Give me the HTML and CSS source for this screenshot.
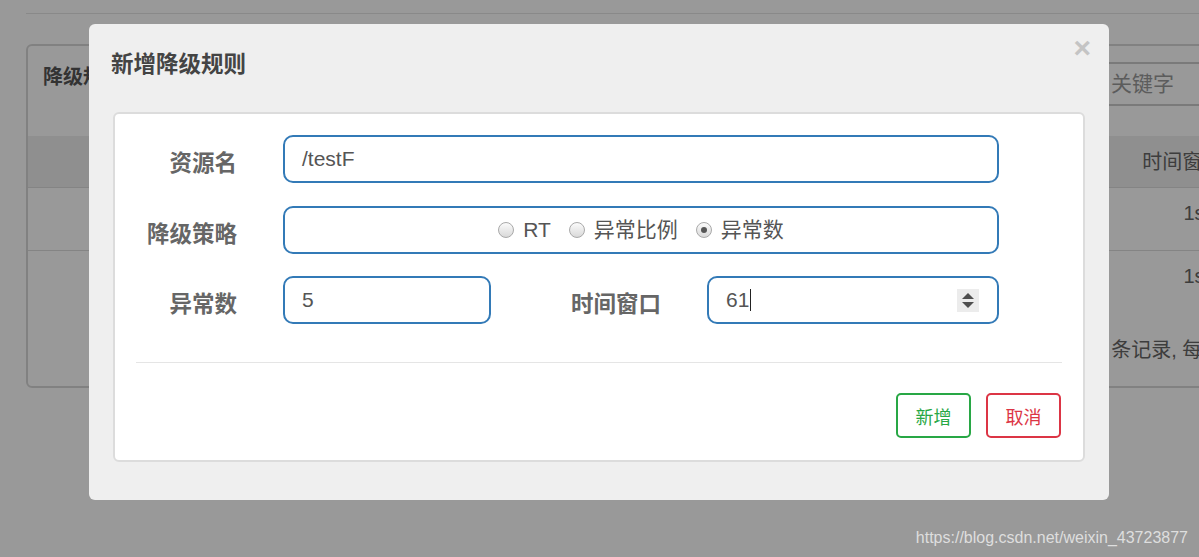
FILE: index.html
```html
<!DOCTYPE html>
<html lang="zh-CN">
<head>
<meta charset="utf-8">
<title>新增降级规则</title>
<link rel="stylesheet" href="styles.css">
</head>
<body>
<div class="page">
  <div class="topline"></div>
  <div class="panel">
    <div class="panel-head">
      <span class="panel-title">降级规则</span>
      <div class="search">关键字</div>
    </div>
    <div class="trow thead"><div class="fill"></div><div class="cell">时间窗口(s)</div></div>
    <div class="trow"><div class="fill"></div><div class="cell">1s</div></div>
    <div class="trow last"><div class="fill"></div><div class="cell">1s</div></div>
    <div class="pager">共 2 条记录, 每页 10 条记录</div>
  </div>
</div>
<div class="mask"></div>
<div class="modal">
  <div class="modal-head">
    <h4 class="modal-title">新增降级规则</h4>
    <span class="close">×</span>
  </div>
  <div class="modal-body">
    <div class="card">
      <div class="row">
        <label class="label">资源名</label>
        <div class="box box-wide">/testF</div>
      </div>
      <div class="row">
        <label class="label">降级策略</label>
        <div class="box box-wide radios">
          <span class="radio"></span><span class="rtext">RT</span>
          <span class="radio"></span><span class="rtext">异常比例</span>
          <span class="radio checked"></span><span class="rtext">异常数</span>
        </div>
      </div>
      <div class="row row-last">
        <label class="label">异常数</label>
        <div class="box box-small">5</div>
        <label class="label label-mid">时间窗口</label>
        <div class="box box-mid">61<span class="caret"></span><span class="grow"></span><span class="spin"><span class="up"></span><span class="down"></span></span></div>
      </div>
      <div class="divider"></div>
      <div class="actions">
        <button class="btn btn-add">新增</button>
        <button class="btn btn-cancel">取消</button>
      </div>
    </div>
  </div>
</div>
<div class="watermark">https://blog.csdn.net/weixin_43723877</div>
</body>
</html>
```
FILE: styles.css
```css
* { box-sizing: border-box; }
html, body {
  margin: 0;
  padding: 0;
  width: 1199px;
  height: 557px;
  overflow: hidden;
  background: #fff;
  font-family: "Liberation Sans", "Noto Sans CJK SC", sans-serif;
}
.page {
  padding-left: 26px;
  width: 1320px;
}
.topline {
  height: 15px;
  border-bottom: 1px solid #e4e4e4;
  margin-top: -1px;
}
.panel {
  margin-top: 30px;
  width: 1260px;
  height: 344px;
  border: 2px solid #d8d8d8;
  border-radius: 6px;
  display: flex;
  flex-direction: column;
}
.panel-head {
  height: 90px;
  display: flex;
  align-items: flex-start;
  justify-content: space-between;
  padding-left: 15px;
}
.panel-title {
  margin-top: 17px;
  font-size: 20px;
  line-height: 28px;
  font-weight: bold;
  color: #555;
}
.search {
  margin-top: 16px;
  margin-right: 39px;
  width: 150px;
  height: 44px;
  border: 2px solid #ccc;
  padding-left: 14px;
  font-size: 21px;
  line-height: 40px;
  color: #999;
}
.trow {
  display: flex;
  height: 63px;
  border-top: 1px solid #ddd;
  font-size: 20px;
  color: #666;
}
.thead {
  height: 51px;
  border-top: none;
  background: #eee;
  align-items: center;
}
.fill { flex: 1; }
.cell {
  width: 140px;
  margin-right: 20px;
  text-align: center;
  padding-top: 13px;
  line-height: 24px;
  white-space: nowrap;
}
.thead .cell { padding-top: 0; }
.pager {
  padding-left: 1041px;
  padding-top: 25px;
  font-size: 20px;
  color: #666;
  line-height: 24px;
  white-space: nowrap;
}
.mask {
  position: absolute;
  inset: 0;
  background: rgba(0, 0, 0, 0.4);
}
.modal {
  position: absolute;
  left: 89px;
  top: 24px;
  width: 1020px;
  height: 476px;
  background: #efefef;
  border-radius: 6px;
}
.modal-head {
  height: 88px;
  padding-left: 22px;
  padding-top: 25px;
}
.modal-title {
  margin: 0;
  font-size: 22.5px;
  line-height: 32px;
  font-weight: bold;
  color: #444;
}
.close {
  position: absolute;
  right: 18px;
  top: 2px;
  font-size: 30px;
  line-height: 44px;
  font-weight: bold;
  color: #c4c4c4;
}
.modal-body {
  padding: 0 24px 38px;
}
.card {
  background: #fff;
  border: 2px solid #dcdcdc;
  border-radius: 6px;
  padding: 21px 21px 22px;
}
.row {
  display: flex;
  align-items: center;
  height: 48px;
  margin-bottom: 23px;
}
.row-last { margin-bottom: 0; margin-top: -1px; }
.label {
  width: 101px;
  margin-right: 46px;
  text-align: right;
  font-size: 22.5px;
  line-height: 30px;
  font-weight: bold;
  color: #666;
  padding-top: 10px;
  white-space: nowrap;
}
.label-mid { width: 170px; }
.box {
  height: 48px;
  border: 2px solid #337ab7;
  border-radius: 10px;
  padding: 0 18px 0 17px;
  display: flex;
  align-items: center;
  font-size: 21px;
  color: #555;
}
.box-wide { width: 716px; }
.box-small { width: 208px; }
.box-mid { width: 292px; }
.radios {
  justify-content: center;
  padding-left: 0;
  padding-right: 0;
}
.radio {
  width: 16px;
  height: 16px;
  border-radius: 50%;
  border: 1px solid #a9a9a9;
  background: linear-gradient(#fbfbfb, #d9d9d9);
  margin-right: 9px;
  display: flex;
  align-items: center;
  justify-content: center;
}
.radio.checked::after {
  content: "";
  width: 6px;
  height: 6px;
  border-radius: 50%;
  background: #555;
}
.rtext {
  margin-right: 18px;
  line-height: 26px;
}
.rtext:last-child { margin-right: 0; }
.caret {
  width: 1px;
  height: 22px;
  background: #222;
  margin-left: 1px;
}
.grow { flex: 1; }
.spin {
  width: 22px;
  height: 23px;
  background: #ececec;
  display: flex;
  flex-direction: column;
  align-items: center;
  justify-content: center;
  gap: 3px;
}
.up {
  width: 0;
  height: 0;
  border-left: 6px solid transparent;
  border-right: 6px solid transparent;
  border-bottom: 6px solid #4f4f4f;
}
.down {
  width: 0;
  height: 0;
  border-left: 6px solid transparent;
  border-right: 6px solid transparent;
  border-top: 6px solid #4f4f4f;
}
.divider {
  margin-top: 38px;
  height: 1px;
  background: #e5e5e5;
}
.actions {
  margin-top: 30px;
  display: flex;
  justify-content: flex-end;
  gap: 15px;
  padding-right: 1px;
}
.btn {
  width: 75px;
  height: 45px;
  background: #fff;
  border-radius: 5px;
  font-family: "Liberation Sans", "Noto Sans CJK SC", sans-serif;
  font-size: 18px;
  padding: 0;
}
.btn-add {
  border: 2px solid #28a745;
  color: #28a745;
}
.btn-cancel {
  border: 2px solid #dc3545;
  color: #dc3545;
}
.watermark {
  position: absolute;
  right: 11px;
  bottom: 9px;
  font-size: 16px;
  line-height: 20px;
  color: #dedede;
}
```
